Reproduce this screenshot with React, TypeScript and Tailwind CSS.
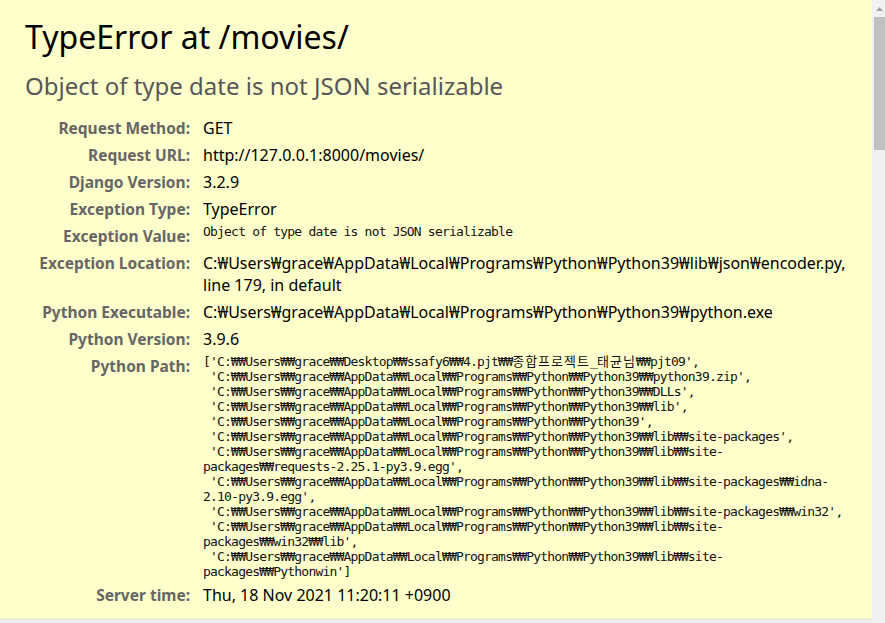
const sans = "font-['Noto_Sans','Noto_Sans_CJK_KR',sans-serif]";
const mono = "font-['DejaVu_Sans_Mono','Noto_Sans_CJK_KR',monospace]";

const W = '₩';
const base = `'C:${W}${W}Users${W}${W}grace${W}${W}AppData${W}${W}Local${W}${W}Programs${W}${W}Python${W}${W}Python39`;

const pythonPath: React.ReactNode[] = [
  <>
    {`['C:${W}${W}Users${W}${W}grace${W}${W}Desktop${W}${W}ssafy6${W}${W}4.pjt${W}${W}`}
    <span className="tracking-[1px]">종합프로젝트</span>_<span className="tracking-[1px]">태균님</span>
    {`${W}${W}pjt09',`}
  </>,
  ` ${base}${W}${W}python39.zip',`,
  ` ${base}${W}${W}DLLs',`,
  ` ${base}${W}${W}lib',`,
  ` ${base}',`,
  ` ${base}${W}${W}lib${W}${W}site-packages',`,
  ` ${base}${W}${W}lib${W}${W}site-`,
  `packages${W}${W}requests-2.25.1-py3.9.egg',`,
  ` ${base}${W}${W}lib${W}${W}site-packages${W}${W}idna-`,
  `2.10-py3.9.egg',`,
  ` ${base}${W}${W}lib${W}${W}site-packages${W}${W}win32',`,
  ` ${base}${W}${W}lib${W}${W}site-`,
  `packages${W}${W}win32${W}${W}lib',`,
  ` ${base}${W}${W}lib${W}${W}site-`,
  `packages${W}${W}Pythonwin']`,
];

const Row = ({ label, children }: { label: string; children: React.ReactNode }) => (
  <div className="flex py-[2.5px]">
    <div className="w-[165px] shrink-0 text-right font-bold text-[15.5px] text-[#666] leading-[22px]">{label}</div>
    <div className="pl-[13px] leading-[22px] text-black">{children}</div>
  </div>
);

const MonoBlock = ({ lines }: { lines: React.ReactNode[] }) => (
  <div className={`${mono} text-[13px] leading-[15px] tracking-[-0.8px] whitespace-pre -mt-[1px] text-[#111]`}>
    {lines.map((l, i) => <div key={i}>{l}</div>)}
  </div>
);

export default function App() {
  return (
    <div className={`${sans} h-[623px] w-[885px] overflow-hidden flex bg-[#eeeeee]`}>
      <div className="flex-1 min-w-0">
        <div className="bg-[#ffffcc] border-b border-[#dddddd] h-[620px] pl-[25px] pt-[17px]">
          <h1 className="text-[32px] leading-[40px] font-normal text-black">TypeError at /movies/</h1>
          <div className="mt-[14px] text-[24px] leading-[30px] text-[#575757]">Object of type date is not JSON serializable</div>
          <div className="mt-[13px] text-[16px]">
            <Row label="Request Method:">GET</Row>
            <Row label="Request URL:">http://127.0.0.1:8000/movies/</Row>
            <Row label="Django Version:">3.2.9</Row>
            <Row label="Exception Type:">TypeError</Row>
            <Row label="Exception Value:">
              <MonoBlock lines={['Object of type date is not JSON serializable']} />
            </Row>
            <Row label="Exception Location:">
              <span className="whitespace-nowrap">C:{W}Users{W}grace{W}AppData{W}Local{W}Programs{W}Python{W}Python39{W}lib{W}json{W}encoder.py,</span>
              <br />
              line 179, in default
            </Row>
            <Row label="Python Executable:">
              <span className="whitespace-nowrap">C:{W}Users{W}grace{W}AppData{W}Local{W}Programs{W}Python{W}Python39{W}python.exe</span>
            </Row>
            <Row label="Python Version:">3.9.6</Row>
            <Row label="Python Path:">
              <MonoBlock lines={pythonPath} />
            </Row>
            <Row label="Server time:">Thu, 18 Nov 2021 11:20:11 +0900</Row>
          </div>
        </div>
      </div>
      <div className="w-[13px] shrink-0 bg-[#f1f1f1] flex flex-col items-end">
        <div className="w-full h-[17px] flex items-center justify-center pl-[2px]">
          <svg width="7" height="4" viewBox="0 0 7 4"><path d="M3.5 0 L7 4 L0 4 Z" fill="#a3a3a3" /></svg>
        </div>
        <div className="w-[11px] h-[133px] bg-[#c1c1c1]" />
      </div>
    </div>
  );
}
